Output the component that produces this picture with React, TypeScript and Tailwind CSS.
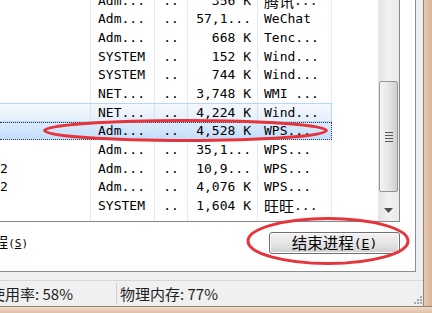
import React from "react";

type Row = {
  image: string;
  user: string;
  cpu: string;
  mem: string;
  desc: string;
  state?: "hover" | "selected";
};

const ROWS: Row[] = [
  { image: "", user: "Adm...", cpu: "..", mem: "356 K", desc: "腾讯..." },
  { image: "", user: "Adm...", cpu: "..", mem: "57,1...", desc: "WeChat" },
  { image: "", user: "Adm...", cpu: "..", mem: "668 K", desc: "Tenc..." },
  { image: "", user: "SYSTEM", cpu: "..", mem: "152 K", desc: "Wind..." },
  { image: "", user: "SYSTEM", cpu: "..", mem: "744 K", desc: "Wind..." },
  { image: "", user: "NET...", cpu: "..", mem: "3,748 K", desc: "WMI ..." },
  { image: "", user: "NET...", cpu: "..", mem: "4,224 K", desc: "Wind...", state: "hover" },
  { image: "", user: "Adm...", cpu: "..", mem: "4,528 K", desc: "WPS...", state: "selected" },
  { image: "", user: "Adm...", cpu: "..", mem: "35,1...", desc: "WPS..." },
  { image: "2", user: "Adm...", cpu: "..", mem: "10,9...", desc: "WPS..." },
  { image: "2", user: "Adm...", cpu: "..", mem: "4,076 K", desc: "WPS..." },
  { image: "", user: "SYSTEM", cpu: "..", mem: "1,604 K", desc: "旺旺..." },
];

const MONO = "font-['DejaVu_Sans_Mono','Noto_Sans_CJK_SC',monospace]";
const CJK = "font-['Noto_Sans_CJK_SC',sans-serif]";
const COLS = "grid grid-cols-[91px_64px_33px_70px_73px]";

// splits CJK runs out so they can be a little larger than the latin half-width glyphs
function Mixed({ text }: { text: string }) {
  const parts = text.split(/([\u4e00-\u9fff]+)/).filter(Boolean);
  return (
    <>
      {parts.map((p, i) =>
        /[\u4e00-\u9fff]/.test(p) ? (
          <span key={i} className={`${CJK} text-[15px]`}>
            {p}
          </span>
        ) : (
          <span key={i}>{p}</span>
        )
      )}
    </>
  );
}

function ListRow({ row }: { row: Row }) {
  const look =
    row.state === "hover"
      ? "border-y border-r border-[#b8d6fb] bg-gradient-to-b from-[#f5f9fe] to-[#e4effc]"
      : row.state === "selected"
        ? "border-y border-r border-dotted border-[#2b3b55] bg-gradient-to-b from-[#dcebfc] to-[#c4ddfb]"
        : "border-r border-[#e3ebf5]";
  const sep = row.state ? "border-r border-[#d5e3f3]" : "border-r border-[#e3ebf5]";

  return (
    <div className={`${COLS} w-[332px] h-[18.7px] shrink-0 items-center ${look}`}>
      <div className={`${sep} h-full flex items-center pl-0 whitespace-nowrap overflow-hidden`}>
        {row.image}
      </div>
      <div className={`${sep} h-full flex items-center pl-[7px] whitespace-nowrap overflow-hidden`}>
        {row.user}
      </div>
      <div className={`${sep} h-full flex items-center justify-center whitespace-nowrap overflow-hidden`}>
        {row.cpu}
      </div>
      <div className={`${sep} h-full flex items-center justify-end pr-[6px] whitespace-nowrap overflow-hidden`}>
        {row.mem}
      </div>
      <div className="h-full flex items-center pl-[6px] whitespace-nowrap overflow-hidden">
        <Mixed text={row.desc} />
      </div>
    </div>
  );
}

function ScrollBar() {
  return (
    <div className="w-[21px] h-full flex flex-col bg-gradient-to-r from-[#e4e4e4] via-[#f1f1f1] to-[#eaeaea]">
      {/* track above thumb */}
      <div className="h-[81px] shrink-0" />
      {/* thumb */}
      <div className="h-[111px] shrink-0 mx-[1px] rounded-[2px] border border-[#959595] bg-gradient-to-r from-[#f4f4f4] via-[#e6e6e6] to-[#cfcfcf] flex flex-col items-center justify-center gap-[2px]">
        <div className="w-[8px] h-[1px] bg-[#5a5a5a]" />
        <div className="w-[8px] h-[1px] bg-[#5a5a5a]" />
        <div className="w-[8px] h-[1px] bg-[#5a5a5a]" />
        <div className="w-[8px] h-[1px] bg-[#5a5a5a]" />
      </div>
      <div className="h-[7px] shrink-0" />
      {/* down arrow button */}
      <div className="flex-1 flex items-center justify-center">
        <svg width="9" height="5" viewBox="0 0 9 5">
          <polygon points="0,0 9,0 4.5,5" fill="#4f4f4f" />
        </svg>
      </div>
    </div>
  );
}

export default function App() {
  return (
    <div className="relative w-[432px] h-[313px] overflow-hidden bg-[#f0f0f0] text-black">
      <div className="flex h-[306px]">
        {/* client area */}
        <div className="w-[423px] flex flex-col">
          {/* tab page */}
          <div className="w-[416px] h-[272px] shrink-0 bg-white border-r border-b border-[#898c95] flex flex-col">
            {/* process list */}
            <div className="w-[400px] h-[222px] shrink-0 border-r border-b border-[#828790] flex">
              <div className={`w-[378px] h-full overflow-hidden flex flex-col ${MONO} text-[13px] leading-none`}>
                <div className="mt-[-9.3px] flex flex-col flex-1">
                  {ROWS.map((r, i) => (
                    <ListRow key={i} row={r} />
                  ))}
                  <div className={`${COLS} w-[332px] flex-1 border-r border-[#e3ebf5]`}>
                    <div className="border-r border-[#e3ebf5]" />
                    <div className="border-r border-[#e3ebf5]" />
                    <div className="border-r border-[#e3ebf5]" />
                    <div className="border-r border-[#e3ebf5]" />
                    <div />
                  </div>
                </div>
              </div>
              <ScrollBar />
            </div>

            {/* show all users + end process */}
            <div className="flex justify-between items-start pr-[15px] mt-[10px]">
              <div className="w-[28px] overflow-hidden flex justify-end items-baseline whitespace-nowrap leading-[18px]">
                <span className={`${CJK} text-[13.5px]`}>显示所有用户的进程</span>
                <span className={`${MONO} text-[11px]`}>
                  (<span className="underline">S</span>)
                </span>
              </div>
              <button className="w-[131px] h-[22px] rounded-[3px] border border-[#707070] bg-gradient-to-b from-[#f2f2f2] via-[#e6e6e6] to-[#d0d0d0] shadow-[inset_0_0_0_1px_#fcfcfc] flex items-center justify-center leading-none">
                <span className={`${CJK} text-[15.5px]`}>结束进程</span>
                <span className={`${MONO} text-[13px]`}>
                  (<span className="underline">E</span>)
                </span>
              </button>
            </div>
          </div>

          <div className="h-[8px] shrink-0" />

          {/* status bar */}
          <div className={`flex-1 border-t border-[#d7d7d7] flex ${CJK} text-[15px] text-[#1e1e1e] leading-none`}>
            <div className="w-[117px] overflow-hidden flex items-center justify-end pr-[43px] whitespace-nowrap border-r border-[#cfcfcf] my-[2px]">
              CPU 使用率: 58%
            </div>
            <div className="flex-1 flex items-center pl-[3px] whitespace-nowrap">物理内存: 77%</div>
            {/* size grip */}
            <div className="w-[12px] flex flex-col justify-end items-end pb-[2px] pr-[1px] gap-[1px]">
              <div className="flex gap-[1px]">
                <div className="w-[2px] h-[2px] bg-[#a8a8a8]" />
              </div>
              <div className="flex gap-[1px]">
                <div className="w-[2px] h-[2px] bg-[#a8a8a8]" />
                <div className="w-[2px] h-[2px] bg-[#a8a8a8]" />
              </div>
              <div className="flex gap-[1px]">
                <div className="w-[2px] h-[2px] bg-[#a8a8a8]" />
                <div className="w-[2px] h-[2px] bg-[#a8a8a8]" />
                <div className="w-[2px] h-[2px] bg-[#a8a8a8]" />
              </div>
            </div>
          </div>
        </div>

        {/* right window frame */}
        <div className="flex-1 border-l border-[#8f8478] bg-gradient-to-r from-[#e6c9b0] to-[#d9b396]" />
      </div>
      {/* bottom window frame */}
      <div className="h-[7px] border-t border-[#8f8478] bg-gradient-to-b from-[#efdccb] to-[#e0bfa3]" />

      {/* red annotation marks */}
      <svg className="absolute inset-0 pointer-events-none" width="432" height="313" viewBox="0 0 432 313">
        <ellipse cx="185.5" cy="130.5" rx="141" ry="10" fill="none" stroke="#e5343a" strokeWidth="3" />
        <ellipse cx="328" cy="241" rx="80" ry="22.5" fill="none" stroke="#e5343a" strokeWidth="3" />
      </svg>
    </div>
  );
}
